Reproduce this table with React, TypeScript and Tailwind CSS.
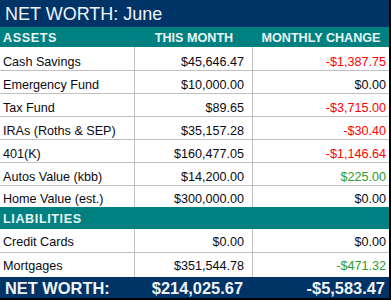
import React from 'react';

type Row = { label: string; value: string; change: string; tone?: 'red' | 'green' };

const assets: Row[] = [
    { label: 'Cash Savings', value: '$45,646.47', change: '-$1,387.75', tone: 'red' },
    { label: 'Emergency Fund', value: '$10,000.00', change: '$0.00' },
    { label: 'Tax Fund', value: '$89.65', change: '-$3,715.00', tone: 'red' },
    { label: 'IRAs (Roths & SEP)', value: '$35,157.28', change: '-$30.40', tone: 'red' },
    { label: '401(K)', value: '$160,477.05', change: '-$1,146.64', tone: 'red' },
    { label: 'Autos Value (kbb)', value: '$14,200.00', change: '$225.00', tone: 'green' },
    { label: 'Home Value (est.)', value: '$300,000.00', change: '$0.00' },
];

const liabilities: Row[] = [
    { label: 'Credit Cards', value: '$0.00', change: '$0.00' },
    { label: 'Mortgages', value: '$351,544.78', change: '-$471.32', tone: 'green' },
];

// heights tuned to the spreadsheet grid
const assetHeights = ['h-[24px]', 'h-[23px]', 'h-[23px]', 'h-[23px]', 'h-[23px]', 'h-[23px]', 'h-[21px]'];
const liabHeights = ['h-[24px]', 'h-[24px]'];
const liabPad = ['pb-[2px]', 'pb-[3px]'];

function DataRow({ r, h, pad = '', last }: { r: Row; h: string; pad?: string; last: boolean }) {
    const tone = r.tone === 'red' ? 'text-[#ff0000]' : r.tone === 'green' ? 'text-[#2f9a2f]' : 'text-[#0a0a14]';
    return (
        <div className={`flex ${h} ${last ? '' : 'border-b border-[#c0c0c0]'} bg-white text-[12.6px] leading-[15px]`}>
            <div className={`w-[135px] border-r border-[#c0c0c0] flex items-end pl-[3px] text-[#0a0a14] whitespace-nowrap ${pad}`}>{r.label}</div>
            <div className={`w-[118px] border-r border-[#c0c0c0] flex items-end justify-end pr-[8px] text-[#0a0a14] ${pad}`}>{r.value}</div>
            <div className={`w-[136px] flex items-end justify-end pr-[3px] ${tone} ${pad}`}>{r.change}</div>
        </div>
    );
}

export default function App() {
    return (
        <div className="w-[391px] h-[300px] bg-white" style={{ fontFamily: '"Liberation Sans", Arial, sans-serif' }}>
            <div className="w-[391px] border-r-2 border-b-2 border-black">
                <div className="h-[27px] bg-[#003366] flex items-end pb-[2px] pl-[5px] text-[18px] leading-[21px] text-[#eef3f8]">
                    NET WORTH: June
                </div>
                <div className="h-[20px] bg-[#008080] flex items-end pb-[1px] text-[12.6px] leading-[15px] font-bold text-[#e8f4f4]">
                    <div className="w-[135px] pl-[3px] tracking-[0.6px]">ASSETS</div>
                    <div className="w-[118px] text-center">THIS MONTH</div>
                    <div className="w-[136px] text-center">MONTHLY CHANGE</div>
                </div>
                {assets.map((r, i) => (
                    <DataRow key={r.label} r={r} h={assetHeights[i]} last={i === assets.length - 1} />
                ))}
                <div className="h-[22px] bg-[#008080] flex items-end pb-[2px] pl-[3px] text-[12.6px] leading-[15px] font-bold text-[#e8f4f4] tracking-[0.6px]">
                    LIABILITIES
                </div>
                {liabilities.map((r, i) => (
                    <DataRow key={r.label} r={r} h={liabHeights[i]} pad={liabPad[i]} last={i === liabilities.length - 1} />
                ))}
                <div className="h-[21px] bg-[#003366] flex items-end text-[16.4px] leading-[19px] font-bold text-[#eef3f8]">
                    <div className="w-[135px] pl-[5px]">NET WORTH:</div>
                    <div className="w-[118px] text-right pr-[10px]">$214,025.67</div>
                    <div className="w-[136px] text-right pr-[4px]">-$5,583.47</div>
                </div>
            </div>
        </div>
    );
}
